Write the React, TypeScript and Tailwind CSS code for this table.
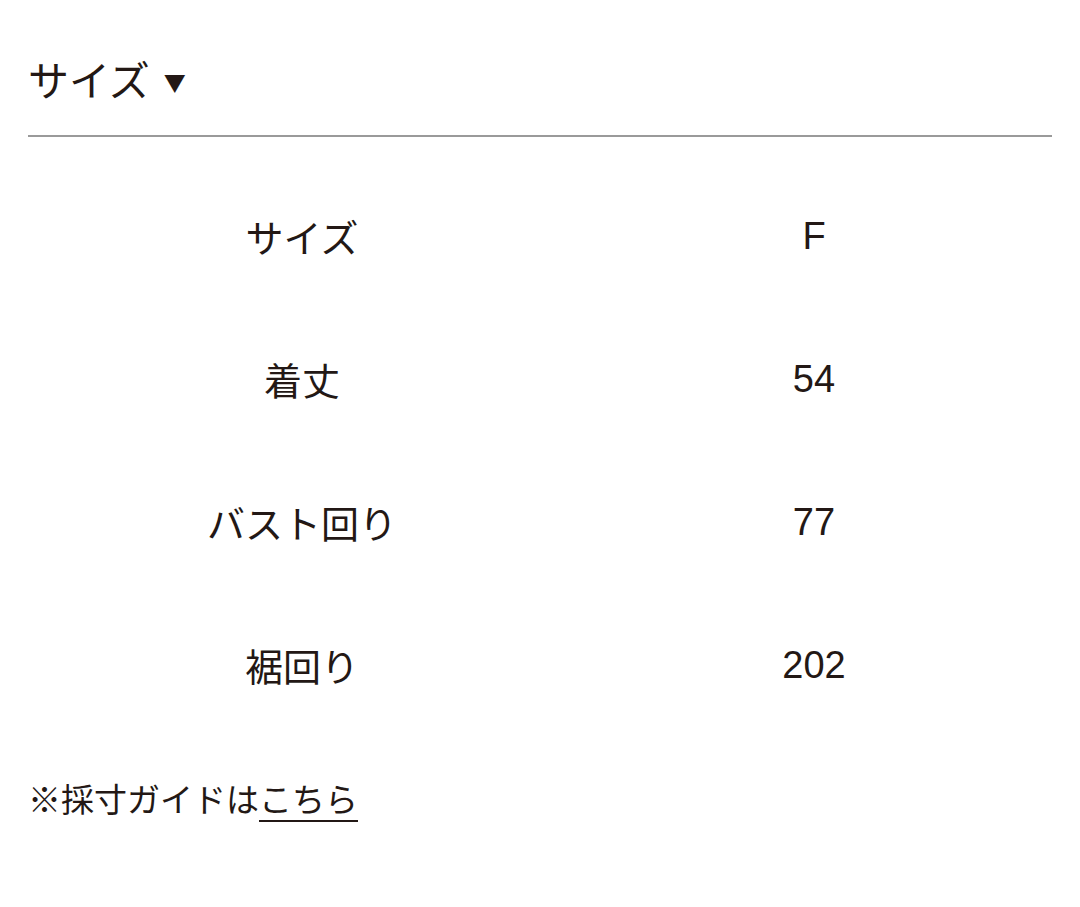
import React from 'react';

const rows = [
  { label: 'サイズ', value: 'F' },
  { label: '着丈', value: '54' },
  { label: 'バスト回り', value: '77' },
  { label: '裾回り', value: '202' },
];

const App = () => {
  return (
    <div
      className="w-[1080px] h-[907px] bg-white text-[#231815] px-[28px] pt-[50px]"
      style={{ fontFamily: '"Noto Sans CJK JP", "Noto Sans", sans-serif' }}
    >
      <div className="flex items-center h-[56px] text-[41px] leading-none">
        <span>サイズ</span>
        <span className="ml-[14px] text-[22px] mt-[6px]">▼</span>
      </div>
      <div className="mt-[29px] h-[2px] bg-[#9a9a9a]" />

      <div className="mt-[27px]">
        {rows.map(row => (
          <div key={row.label} className="grid grid-cols-[548px_476px] h-[143px] items-center text-[38px] leading-none">
            <div className="text-center">{row.label}</div>
            <div className="text-center" style={{ fontFamily: '"Liberation Sans", "Noto Sans CJK JP", sans-serif' }}>{row.value}</div>
          </div>
        ))}
      </div>

      <p className="mt-[46px] text-[33px] leading-none">
        ※採寸ガイドは<span className="underline underline-offset-[8px] decoration-[2px]">こちら</span>
      </p>
    </div>
  );
};

export default App;
